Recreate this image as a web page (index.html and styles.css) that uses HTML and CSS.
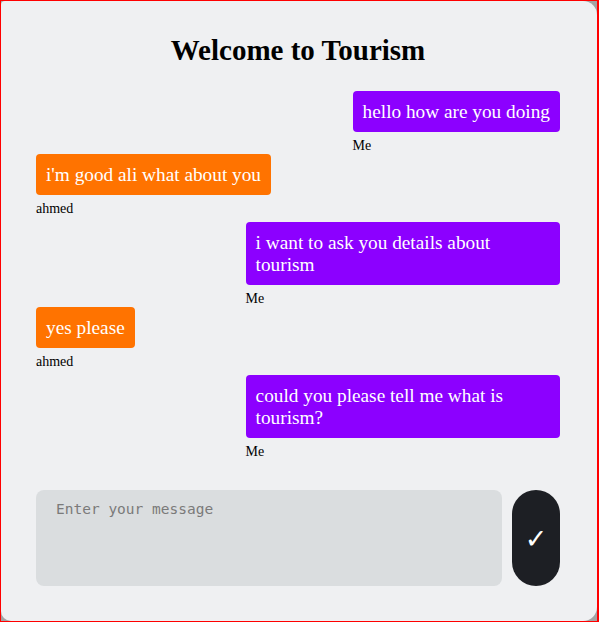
FILE: index.html
```html
<!DOCTYPE html>
<html>
<head>
<meta charset="utf-8">
<link rel="stylesheet" href="styles.css">
</head>
<body>
<div class="frame">
  <div class="card">
    <h1 class="title">Welcome to Tourism</h1>
    <div class="chat">
      <div class="msg me">
        <div class="bubble">hello how are you doing</div>
        <div class="name">Me</div>
      </div>
      <div class="msg other">
        <div class="bubble">i'm good ali what about you</div>
        <div class="name">ahmed</div>
      </div>
      <div class="msg me">
        <div class="bubble">i want to ask you details about tourism</div>
        <div class="name">Me</div>
      </div>
      <div class="msg other">
        <div class="bubble">yes please</div>
        <div class="name">ahmed</div>
      </div>
      <div class="msg me">
        <div class="bubble">could you please tell me what is tourism?</div>
        <div class="name">Me</div>
      </div>
    </div>
    <div class="composer">
      <textarea class="input" placeholder="Enter your message"></textarea>
      <button class="send">&#10003;</button>
    </div>
  </div>
</div>
</body>
</html>
```
FILE: styles.css
```css
html, body {
  margin: 0;
  padding: 0;
}
body {
  font-family: "Liberation Serif", "Times New Roman", serif;
}
.frame {
  box-sizing: border-box;
  width: 599px;
  height: 622px;
  border: 1px solid #ff0000;
  border-right-width: 2px;
  background: #a3a3a3;
  overflow: hidden;
}
.card {
  box-sizing: border-box;
  height: 100%;
  background: #eff0f2;
  border-radius: 4px 14px 14px 10px;
  padding: 20px 37px 0 35px;
}
.title {
  margin: 12px 0 24px;
  font-size: 29px;
  line-height: 34px;
  text-align: center;
  font-weight: bold;
  color: #000;
}
.chat {
  display: flex;
  flex-direction: column;
}
.msg {
  display: flex;
  flex-direction: column;
  max-width: 60%;
}
.msg.me {
  align-self: flex-end;
}
.msg.other {
  align-self: flex-start;
  margin-bottom: 5px;
}
.bubble {
  color: #fff;
  font-size: 19.3px;
  line-height: 22px;
  padding: 10px 10px 9px;
  border-radius: 4px;
}
.me .bubble {
  background: #8c00ff;
}
.other .bubble {
  background: #ff7300;
}
.name {
  font-size: 14px;
  line-height: 16px;
  margin-top: 6px;
  color: #000;
}
.composer {
  display: flex;
  gap: 10px;
  margin-top: 30px;
}
.input {
  flex: 1;
  height: 96px;
  box-sizing: border-box;
  border: none;
  outline: none;
  resize: none;
  background: #dadddf;
  border-radius: 8px;
  padding: 11px 20px;
  font-family: "DejaVu Sans Mono", monospace;
  font-size: 14.5px;
  color: #333;
}
.input::placeholder {
  color: #7a7a7a;
}
.send {
  width: 48px;
  height: 96px;
  border: none;
  border-radius: 24px;
  background: #1d1f24;
  color: #fff;
  font-size: 27px;
  font-weight: bold;
  font-family: "DejaVu Sans", sans-serif;
  padding: 0;
}
```
